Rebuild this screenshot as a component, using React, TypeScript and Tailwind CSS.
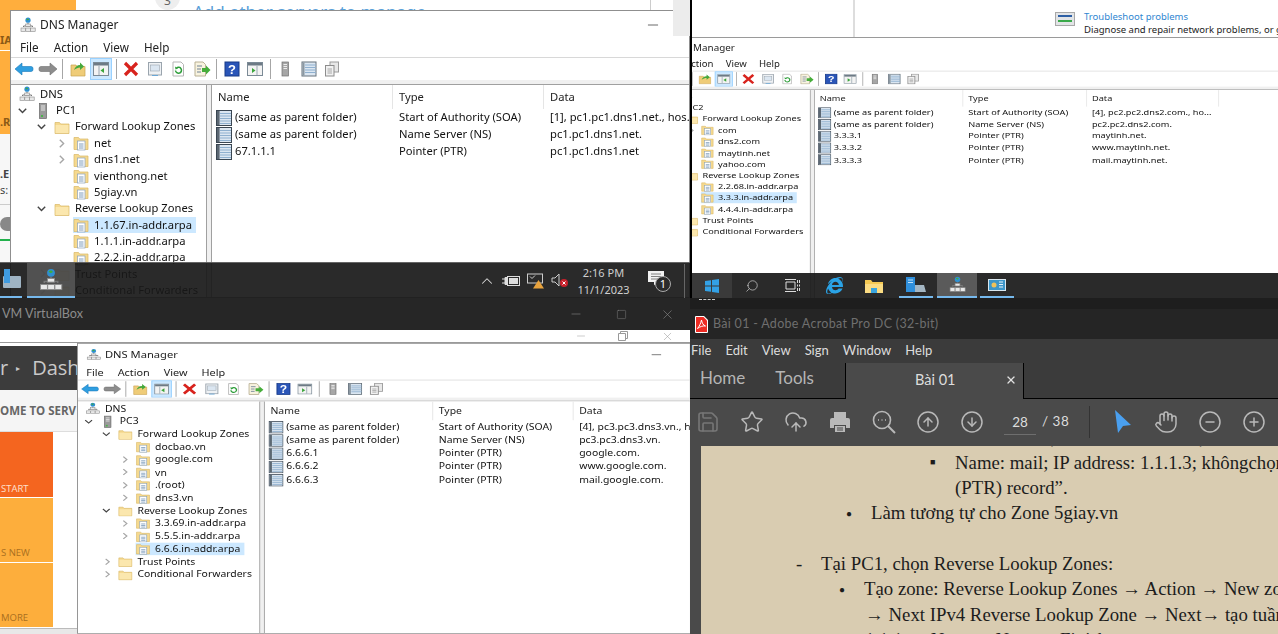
import { ChevronUp, CircleArrowDown, CircleArrowUp, CircleMinus, CirclePlus, CloudUpload, Hand, Minus, Save, Search, Square, Star, X } from "lucide-react";
import { FaInternetExplorer } from "react-icons/fa";

type TreeRow = { label: string; depth: number; icon: "dns" | "server" | "folder" | "zone"; arrow?: "open" | "closed"; selected?: boolean };

// icons of the mmc console
function DnsIcon({ size = 16 }: { size?: number }) {
  return (
    <svg width={size} height={size} viewBox="0 0 16 16">
      <circle cx="8" cy="3.2" r="2.6" fill="#2f8fd0" />
      <path d="M6.4 2.2c1-.9 2.4-.5 2.8.4-.6.6-1 .3-1.4.9-.5-.4-1-.4-1.4-1.3z" fill="#3fae3f" />
      <path d="M8 6v3M3.5 10V9h9v1" stroke="#777" fill="none" />
      <rect x="5.7" y="7" width="4.6" height="2.4" fill="#e8e8e8" stroke="#888" strokeWidth=".6" />
      <rect x="1" y="11" width="4.6" height="3.4" fill="#e8e8e8" stroke="#888" strokeWidth=".6" />
      <rect x="5.8" y="11" width="4.6" height="3.4" fill="#e8e8e8" stroke="#888" strokeWidth=".6" />
      <rect x="10.6" y="11" width="4.6" height="3.4" fill="#e8e8e8" stroke="#888" strokeWidth=".6" />
    </svg>
  );
}

function ServerIcon() {
  return (
    <svg width="16" height="16" viewBox="0 0 16 16">
      <rect x="4.5" y="0.5" width="7" height="15" fill="#9a9a9a" stroke="#666" strokeWidth=".7" />
      <path d="M6 3h4M6 5h4M6 7h4" stroke="#e6e6e6" />
      <rect x="6" y="12" width="2" height="2" fill="#4bb34b" />
    </svg>
  );
}

function FolderIcon() {
  return (
    <svg width="16" height="16" viewBox="0 0 16 16">
      <path d="M1 3.5h4.5l1.2 1.5H15v9.5H1z" fill="#f5d98f" stroke="#d9b765" strokeWidth=".7" />
      <path d="M1.6 6h12.8v8H1.6z" fill="#fbe7ae" />
    </svg>
  );
}

function ZoneIcon() {
  return (
    <svg width="16" height="16" viewBox="0 0 16 16">
      <path d="M1 2.5h4.5L6.7 4H15v10.5H1z" fill="#f5d98f" stroke="#d9b765" strokeWidth=".7" />
      <rect x="4.5" y="6" width="7.5" height="9" fill="#fff" stroke="#8aa2bb" strokeWidth=".7" />
      <path d="M6 9h4.5M6 11h4.5M6 13h4.5" stroke="#5f85ad" strokeWidth=".8" />
    </svg>
  );
}

function RecordIcon() {
  return (
    <svg width="16" height="16" viewBox="0 0 16 16">
      <rect x="0.5" y="0.5" width="15" height="15" fill="#dbe6f1" stroke="#3a4652" />
      <rect x="1" y="1" width="2.6" height="14" fill="#5c6873" />
      <path d="M4 3.5h11M4 6h11M4 8.5h11M4 11h11M4 13.5h11" stroke="#8fb0cf" />
    </svg>
  );
}

function ToolIcon({ name }: { name: string }) {
  switch (name) {
    case "back":
      return (
        <svg width="20" height="16" viewBox="0 0 20 16">
          <path d="M1 8l7-6v3.500h9a2 2 0 0 1 2 2v1a2 2 0 0 1-2 2H8V14z" fill="#2f9ee0" stroke="#1a78b8" strokeWidth=".6" />
        </svg>
      );
    case "forward":
      return (
        <svg width="20" height="16" viewBox="0 0 20 16">
          <path d="M19 8l-7-6v3.500H3a2 2 0 0 0-2 2v1a2 2 0 0 0 2 2h9V14z" fill="#8d8d8d" stroke="#6e6e6e" strokeWidth=".6" />
        </svg>
      );
    case "up":
      return (
        <svg width="16" height="16" viewBox="0 0 16 16">
          <path d="M1 4h5l1 1.500h8V15H1z" fill="#efcc78" stroke="#c9a352" strokeWidth=".7" />
          <path d="M4 9c1-3 3-5 6-5V1.500l4 4-4 3.500V6.500c-2 0-4 1-6 2.500z" fill="#45a83c" />
        </svg>
      );
    case "pane":
      return (
        <svg width="16" height="14" viewBox="0 0 16 14">
          <rect x="0.5" y="0.5" width="15" height="13" fill="#f3f3f3" stroke="#7b8a96" />
          <rect x="1" y="1" width="14" height="2.500" fill="#6d7a85" />
          <path d="M6 4v9" stroke="#9aa7b2" />
          <path d="M11 6v5L7.500 8.500z" fill="#3ba53b" />
        </svg>
      );
    case "delete":
      return (
        <svg width="16" height="16" viewBox="0 0 16 16">
          <path d="M2 2l12 12M14 2L2 14" stroke="#d8231d" strokeWidth="3.200" />
        </svg>
      );
    case "props":
      return (
        <svg width="16" height="16" viewBox="0 0 16 16">
          <rect x="1.500" y="1.500" width="13" height="12.500" fill="#eef1f4" stroke="#9aa4ad" />
          <rect x="3.500" y="4" width="9" height="6" fill="#dbe6f1" stroke="#9aa4ad" strokeWidth=".6" />
          <path d="M5 14.500h6" stroke="#6aa7d6" />
        </svg>
      );
    case "refresh":
      return (
        <svg width="16" height="16" viewBox="0 0 16 16">
          <path d="M3 1h8l2.500 2.500V15H3z" fill="#fff" stroke="#b5b5b5" />
          <path d="M5.500 9.500a3 3 0 1 0 1-2.500" fill="none" stroke="#2e9e3a" strokeWidth="1.500" />
          <path d="M5 5.500l.5 3 2.500-1z" fill="#2e9e3a" />
        </svg>
      );
    case "export":
      return (
        <svg width="18" height="16" viewBox="0 0 18 16">
          <path d="M2 1h8l2.500 2.500V15H2z" fill="#f8f3df" stroke="#b8b094" />
          <path d="M4 5h5M4 8h4M4 11h4" stroke="#6f8195" />
          <path d="M9 7h4V4.500L17.500 9 13 13.500V11H9z" fill="#46ad3a" />
        </svg>
      );
    case "help":
      return (
        <svg width="16" height="16" viewBox="0 0 16 16">
          <rect x="1" y="1" width="14" height="14" fill="#2a55b8" stroke="#173a88" />
          <text x="8" y="13" textAnchor="middle" fontSize="13" fontWeight="700" fill="#fff" fontFamily="Liberation Sans">?</text>
        </svg>
      );
    case "console":
      return (
        <svg width="16" height="14" viewBox="0 0 16 14">
          <rect x="0.500" y="0.500" width="15" height="13" fill="#f3f3f3" stroke="#7b8a96" />
          <rect x="1" y="1" width="14" height="2.500" fill="#6d7a85" />
          <path d="M10 4v9" stroke="#9aa7b2" />
          <path d="M5 6v5l3.500-2.500z" fill="#3ba53b" />
        </svg>
      );
    case "server":
      return (
        <svg width="16" height="16" viewBox="0 0 16 16">
          <rect x="5" y="1" width="6.500" height="14" fill="#a6a6a6" stroke="#6f6f6f" strokeWidth=".7" />
          <path d="M6.500 3.500h3.500M6.500 5.500h3.500M6.500 7.500h3.500" stroke="#ececec" />
        </svg>
      );
    case "list":
      return (
        <svg width="16" height="16" viewBox="0 0 16 16">
          <rect x="1" y="1" width="14" height="14" fill="#dbe6f1" stroke="#66727d" />
          <rect x="1.500" y="1.500" width="2" height="13" fill="#8b97a1" />
          <path d="M4 4h11M4 6.500h11M4 9h11M4 11.500h11" stroke="#8fb0cf" />
        </svg>
      );
    default:
      return (
        <svg width="16" height="16" viewBox="0 0 16 16">
          <rect x="6" y="1" width="8.500" height="10" fill="#e8e8e8" stroke="#9b9b9b" />
          <rect x="1.500" y="4.500" width="8.500" height="10.500" fill="#f1f1f1" stroke="#8d8d8d" />
          <path d="M3.500 8h4.500M3.500 10h4.500M3.500 12h4.500" stroke="#a8a8a8" />
        </svg>
      );
  }
}

function ToolSep() {
  return <div className="mx-[2px] h-[20px] w-px bg-[#a6a6a6]" />;
}

function Tool({ name, active }: { name: string; active?: boolean }) {
  return (
    <div className={active ? "flex h-[22px] w-[22px] items-center justify-center border border-[#99d1ff] bg-[#cce8ff]" : "flex h-[22px] w-[22px] items-center justify-center"}>
      <ToolIcon name={name} />
    </div>
  );
}

function TreeLine({ row }: { row: TreeRow }) {
  return (
    <div className="flex h-[16.35px] items-center whitespace-nowrap">
      <div className="flex h-full shrink-0 items-center justify-end pr-[8px]" style={{ width: 5 + 19 * row.depth }}>
        {row.arrow === "open" && (
          <svg width="9" height="6" viewBox="0 0 9 6"><path d="M.8 .8L4.500 4.600 8.200 .8" fill="none" stroke="#444" strokeWidth="1.400" /></svg>
        )}
        {row.arrow === "closed" && (
          <svg width="6" height="9" viewBox="0 0 6 9"><path d="M.8 .8L4.600 4.500 .8 8.200" fill="none" stroke="#a6a6a6" strokeWidth="1.400" /></svg>
        )}
      </div>
      <div className={row.selected ? "flex h-full items-center gap-[5px] bg-[#cce8ff] pr-[4px]" : "flex h-full items-center gap-[5px]"}>
        {row.icon === "dns" && <DnsIcon />}
        {row.icon === "server" && <ServerIcon />}
        {row.icon === "folder" && <FolderIcon />}
        {row.icon === "zone" && <ZoneIcon />}
        <span>{row.label}</span>
      </div>
    </div>
  );
}

function DnsWindow({ className, tree, records, minimize = true, titleClass = "ml-[4px]" }: { className: string; tree: TreeRow[]; records: string[][]; minimize?: boolean; titleClass?: string }) {
  return (
    <div className={"absolute flex flex-col overflow-hidden border border-[#8f8f8f] bg-white font-['Noto_Sans',sans-serif] text-[11.2px] text-[#111] blur-[0.3px] " + className}>
      <div className="flex h-[27px] shrink-0 items-center pl-[9px] text-[12px]">
        <DnsIcon />
        <span className={"text-[#222] " + titleClass}>DNS Manager</span>
        {minimize && <Minus size={16} strokeWidth={1.2} className="ml-auto mr-[28px] text-[#444]" />}
      </div>
      <div className="flex h-[20px] shrink-0 items-center gap-[15px] border-b border-[#d8d8d8] pl-[9px] text-[11.7px] text-[#222]">
        <span>File</span>
        <span>Action</span>
        <span>View</span>
        <span>Help</span>
      </div>
      <div className="flex h-[22px] shrink-0 items-center gap-[1.5px] pl-[2px]">
        <Tool name="back" />
        <Tool name="forward" />
        <ToolSep />
        <Tool name="up" />
        <Tool name="pane" active />
        <ToolSep />
        <Tool name="delete" />
        <Tool name="props" />
        <Tool name="refresh" />
        <Tool name="export" />
        <ToolSep />
        <Tool name="help" />
        <Tool name="console" />
        <ToolSep />
        <Tool name="server" />
        <Tool name="list" />
        <Tool name="copy" />
      </div>
      <div className="h-[5px] shrink-0 border-b border-[#a0a0a0] bg-[#f0f0f0]" />
      <div className="flex min-h-0 flex-1 bg-[#f0f0f0]">
        <div className="w-[196px] shrink-0 overflow-hidden border-r border-[#a0a0a0] bg-white pt-px">
          {tree.map((row) => (
            <TreeLine key={row.label} row={row} />
          ))}
        </div>
        <div className="ml-[4px] flex-1 overflow-hidden border-l border-[#a0a0a0] bg-white">
          <div className="flex h-[24px] items-center text-[#222]">
            <div className="h-full w-[181px] shrink-0 border-r border-[#e5e5e5] pl-[6px] leading-[23px]">Name</div>
            <div className="h-full w-[151px] shrink-0 border-r border-[#e5e5e5] pl-[6px] leading-[23px]">Type</div>
            <div className="h-full w-[161px] shrink-0 border-r border-[#e5e5e5] pl-[6px] leading-[23px]">Data</div>
          </div>
          {records.map((record, i) => (
            <div key={i} className="flex h-[17.1px] items-center whitespace-nowrap">
              <div className="flex w-[181px] shrink-0 items-center gap-[3px] pl-[4px]">
                <RecordIcon />
                <span>{record[0]}</span>
              </div>
              <div className="w-[151px] shrink-0 pl-[6px]">{record[1]}</div>
              <div className="w-[161px] shrink-0 truncate pl-[6px]">{record[2]}</div>
            </div>
          ))}
        </div>
      </div>
    </div>
  );
}

const tree1: TreeRow[] = [
  { label: "DNS", depth: 0, icon: "dns" },
  { label: "PC1", depth: 1, icon: "server", arrow: "open" },
  { label: "Forward Lookup Zones", depth: 2, icon: "folder", arrow: "open" },
  { label: "net", depth: 3, icon: "zone", arrow: "closed" },
  { label: "dns1.net", depth: 3, icon: "zone", arrow: "closed" },
  { label: "vienthong.net", depth: 3, icon: "zone" },
  { label: "5giay.vn", depth: 3, icon: "zone" },
  { label: "Reverse Lookup Zones", depth: 2, icon: "folder", arrow: "open" },
  { label: "1.1.67.in-addr.arpa", depth: 3, icon: "zone", selected: true },
  { label: "1.1.1.in-addr.arpa", depth: 3, icon: "zone" },
  { label: "2.2.2.in-addr.arpa", depth: 3, icon: "zone" },
  { label: "Trust Points", depth: 2, icon: "folder", arrow: "closed" },
  { label: "Conditional Forwarders", depth: 2, icon: "folder", arrow: "closed" },
];

const tree2: TreeRow[] = [
  { label: "DNS", depth: 0, icon: "dns" },
  { label: "PC2", depth: 1, icon: "server", arrow: "open" },
  { label: "Forward Lookup Zones", depth: 2, icon: "folder", arrow: "open" },
  { label: "com", depth: 3, icon: "zone", arrow: "closed" },
  { label: "dns2.com", depth: 3, icon: "zone" },
  { label: "maytinh.net", depth: 3, icon: "zone" },
  { label: "yahoo.com", depth: 3, icon: "zone" },
  { label: "Reverse Lookup Zones", depth: 2, icon: "folder", arrow: "open" },
  { label: "2.2.68.in-addr.arpa", depth: 3, icon: "zone" },
  { label: "3.3.3.in-addr.arpa", depth: 3, icon: "zone", selected: true },
  { label: "4.4.4.in-addr.arpa", depth: 3, icon: "zone" },
  { label: "Trust Points", depth: 2, icon: "folder", arrow: "closed" },
  { label: "Conditional Forwarders", depth: 2, icon: "folder", arrow: "closed" },
];

const tree3: TreeRow[] = [
  { label: "DNS", depth: 0, icon: "dns" },
  { label: "PC3", depth: 1, icon: "server", arrow: "open" },
  { label: "Forward Lookup Zones", depth: 2, icon: "folder", arrow: "open" },
  { label: "docbao.vn", depth: 3, icon: "zone" },
  { label: "google.com", depth: 3, icon: "zone", arrow: "closed" },
  { label: "vn", depth: 3, icon: "zone", arrow: "closed" },
  { label: ".(root)", depth: 3, icon: "zone", arrow: "closed" },
  { label: "dns3.vn", depth: 3, icon: "zone", arrow: "closed" },
  { label: "Reverse Lookup Zones", depth: 2, icon: "folder", arrow: "open" },
  { label: "3.3.69.in-addr.arpa", depth: 3, icon: "zone", arrow: "closed" },
  { label: "5.5.5.in-addr.arpa", depth: 3, icon: "zone", arrow: "closed" },
  { label: "6.6.6.in-addr.arpa", depth: 3, icon: "zone", selected: true },
  { label: "Trust Points", depth: 2, icon: "folder", arrow: "closed" },
  { label: "Conditional Forwarders", depth: 2, icon: "folder", arrow: "closed" },
];

const SOA = "Start of Authority (SOA)";
const NS = "Name Server (NS)";
const PTR = "Pointer (PTR)";
const same = "(same as parent folder)";

const records1 = [
  [same, SOA, "[1], pc1.pc1.dns1.net., hos."],
  [same, NS, "pc1.pc1.dns1.net."],
  ["67.1.1.1", PTR, "pc1.pc1.dns1.net"],
];
const records2 = [
  [same, SOA, "[4], pc2.pc2.dns2.com., ho..."],
  [same, NS, "pc2.pc2.dns2.com."],
  ["3.3.3.1", PTR, "maytinh.net."],
  ["3.3.3.2", PTR, "www.maytinh.net."],
  ["3.3.3.3", PTR, "mail.maytinh.net."],
];
const records3 = [
  [same, SOA, "[4], pc3.pc3.dns3.vn., hostmaster"],
  [same, NS, "pc3.pc3.dns3.vn."],
  ["6.6.6.1", PTR, "google.com."],
  ["6.6.6.2", PTR, "www.google.com."],
  ["6.6.6.3", PTR, "mail.google.com."],
];

function TrayIcons() {
  return (
    <div className="flex items-center text-[#d8d8d8]">
      <ChevronUp size={18} strokeWidth={1.4} className="mr-[6px]" />
      <svg width="18" height="12" viewBox="0 0 18 12" className="mr-[7px]">
        <rect x="5.500" y="1.500" width="12" height="9" fill="none" stroke="#ddd" />
        <rect x="7" y="3" width="9" height="6" fill="#ddd" />
        <path d="M0 4h3M0 8h3M3 2.500h2.500v7H3z" stroke="#ddd" fill="#ddd" />
      </svg>
      <svg width="18" height="16" viewBox="0 0 18 16" className="mr-[6px]">
        <rect x="0.500" y="1" width="15" height="9" fill="none" stroke="#ccc" />
        <path d="M3 3.500l2 2 3-3" stroke="#ccc" fill="none" />
        <path d="M11.500 7l5.500 8.500H6z" fill="#e8a33d" />
      </svg>
      <svg width="18" height="16" viewBox="0 0 18 16" className="mr-[7.500px]">
        <path d="M1 5h3l4-4v12L4 9H1z" fill="none" stroke="#ccc" />
        <circle cx="13" cy="10" r="4" fill="#c8202b" />
        <path d="M11.500 8.500l3 3M14.500 8.500l-3 3" stroke="#fff" />
      </svg>
      <div className="w-[54px] text-center text-[11px] leading-[17px] text-[#cfcfcf]">
        <div>2:16 PM</div>
        <div className="whitespace-nowrap">11/1/2023</div>
      </div>
      <div className="relative ml-[17.500px] mr-[20px] h-[20px] w-[16px]">
        <svg width="16" height="15" viewBox="0 0 16 15">
          <path d="M0 0h16v11H9l-3 3.500V11H0z" fill="#f2f2f2" />
          <path d="M3 3h10M3 5.500h10M3 8h7" stroke="#666" strokeWidth=".8" />
        </svg>
        <div className="absolute left-[7px] top-[5px] flex h-[16px] w-[16px] items-center justify-center rounded-full border border-[#aaa] bg-[#2b2b2b] text-[11px] leading-none text-white">1</div>
      </div>
    </div>
  );
}

function VmOneTop() {
  return (
    <div className="relative overflow-hidden bg-white">
      {/* server manager behind the console */}
      <div className="absolute left-0 top-0 h-[50px] w-[76px] bg-[#ffae3d] pl-0 pt-[32px] text-[11px] font-bold text-[#8c5a16]">IA</div>
      <div className="absolute left-0 top-[51px] h-[83px] w-[76px] bg-[#ffae3d] pt-[63px] text-[11px] font-bold text-[#8c5a16]">.R</div>
      <div className="absolute left-0 top-[134px] h-[130px] w-[10px] overflow-hidden bg-[#f7f7f7] font-['Noto_Sans',sans-serif] text-[11px] text-[#444]">
        <div className="mt-[33px] font-bold leading-[14px]">.E</div>
        <div className="mt-[2px] leading-[14px]">s:</div>
        <div className="mt-[7px] h-px bg-[#ccc]" />
        <div className="mt-[12px] h-[14px] w-[10px] rounded-l-full bg-[#888]" />
        <div className="mt-[8px] h-[2px] bg-[#22b14c]" />
      </div>
      <div className="absolute left-[155px] top-[-15px] flex h-[25px] w-[25px] items-end justify-center rounded-full bg-[#eeeeee] text-[12px] text-[#666]">3</div>
      <div className="absolute left-[193px] top-[2px] whitespace-nowrap font-['Noto_Sans',sans-serif] text-[17px] leading-[20px] text-[#5aa0d8]">Add other servers to manage</div>
      <div className="absolute left-[650px] top-0 h-[10px] w-px bg-[#cccccc]" />

      <DnsWindow className="left-[10px] top-[10px] h-[288px] w-[680px]" tree={tree1} records={records1} />
      <div className="absolute left-[673px] top-0 h-[36px] w-[17px] bg-[#ececec]" />

      {/* see-through windows taskbar */}
      <div className="absolute inset-x-0 bottom-0 flex h-[36px] items-center border-t border-[#bdbdbd]/40 bg-[#181818]/92">
        <div className="relative h-full w-[22px] overflow-hidden border-b-2 border-[#76b9ed]">
          <div className="absolute right-[1px] top-[13px] h-[12px] w-[18px] rounded-[1px] bg-[#9fb4c4]" />
          <div className="absolute right-[12px] top-[6px] h-[14px] w-[6px] bg-[#3f9be0]" />
        </div>
        <div className="ml-[5px] flex h-full w-[48px] items-center justify-center border-b-2 border-[#76b9ed] bg-[#9a9a9a]/35">
          <DnsIcon size={24} />
        </div>
        <div className="ml-auto border-r border-[#666]">
          <TrayIcons />
        </div>
        <div className="w-[5px]" />
      </div>
    </div>
  );
}

function VmThreeBottom() {
  return (
    <div className="relative flex flex-col overflow-hidden bg-white">
      <div className="flex h-[32px] shrink-0 items-center bg-[#262626] bg-[radial-gradient(#383838_0.6px,transparent_0.6px)] bg-[length:4px_4px] pl-[2px] font-['Lato',sans-serif] text-[12.600px] text-[#8c8c8c]">
        <span className="w-[90px] shrink-0 whitespace-nowrap">VM VirtualBox</span>
        <Minus size={14} strokeWidth={1} className="ml-[477px] shrink-0 text-[#888]" />
        <Square size={11} strokeWidth={1} className="ml-[33px] shrink-0 text-[#888]" />
        <X size={15} strokeWidth={1} className="ml-[33px] shrink-0 text-[#888]" />
      </div>
      <div className="flex h-[13px] shrink-0 items-center border-b border-[#9a9a9a]">
        <Minus size={12} strokeWidth={1} className="ml-[575px] text-[#999]" />
        <svg width="10" height="10" viewBox="0 0 10 10" className="ml-[31px]"><path d="M.5 2.500h7v7h-7zM2.500 2.500v-2h7v7h-2" fill="#fff" stroke="#999" /></svg>
        <X size={13} strokeWidth={1} className="ml-[33px] text-[#999]" />
      </div>
      {/* server manager dashboard behind the console */}
      <div className="flex w-[77px] flex-1 flex-col font-['Open_Sans',sans-serif]">
        <div className="h-[3px] shrink-0" />
        <div className="flex h-[44px] shrink-0 items-center gap-[8px] overflow-hidden whitespace-nowrap bg-[#3c3c3c] text-[20px] text-[#c9c9c9]">
          <span>r</span>
          <span className="text-[8px]">▸</span>
          <span className="ml-[4px]">Dash</span>
        </div>
        <div className="flex h-[42px] shrink-0 items-center overflow-hidden whitespace-nowrap border-b border-[#dddddd] bg-[#f5f5f5] text-[11.500px] font-bold text-[#666]">OME TO SERV</div>
        <div className="flex h-[65px] w-[53px] shrink-0 items-end bg-[#f4651f] pb-[1px] pl-[1px] text-[9.500px] text-[#ffe0cc]">START</div>
        <div className="mt-px flex h-[64px] w-[53px] shrink-0 items-end bg-[#fdae3c] pb-[2px] pl-[1px] text-[9.500px] text-[#a96f20]">S NEW</div>
        <div className="mt-px flex h-[64px] w-[53px] shrink-0 items-end bg-[#fdae3c] pb-[2px] pl-[1px] text-[9.500px] text-[#a96f20]">MORE</div>
        <div className="mt-px flex-1 border-t border-[#bbbbbb] bg-[#e8e8e8]" />
      </div>
      <DnsWindow className="left-[77px] top-[45px] h-[373px] w-[660px] origin-top-left scale-x-[0.93] scale-y-[0.78]" tree={tree3} records={records3} />
    </div>
  );
}

function VmTwoTop() {
  return (
    <div className="relative overflow-hidden border-l-2 border-black bg-white">
      <div className="absolute left-[161px] top-0 h-[37px] w-[2px] bg-[#dddddd]" />
      <div className="absolute left-[363px] top-[12px]">
        <svg width="20" height="14" viewBox="0 0 20 14">
          <rect x="0.500" y="0.500" width="19" height="13" fill="#e2e4e6" stroke="#a8a8a8" />
          <path d="M3 4h14" stroke="#2d5fa5" strokeWidth="2" />
          <path d="M3 9h14" stroke="#3aa94a" strokeWidth="2" />
        </svg>
      </div>
      <div className="absolute left-[392px] top-[10px] whitespace-nowrap font-['Noto_Sans',sans-serif] text-[9.500px] leading-[13px]">
        <div className="text-[#2f86d1]">Troubleshoot problems</div>
        <div className="text-[#222]">Diagnose and repair network problems, or get troubleshooting information.</div>
      </div>
      <div className="absolute inset-x-0 top-[37px] h-px bg-[#9a9a9a]" />

      <DnsWindow minimize={false} titleClass="ml-0" className="left-[-42px] top-[39px] h-[377px] w-[790px] origin-top-left scale-x-[0.82] scale-y-[0.69] border-0" tree={tree2} records={records2} />

      <div className="absolute inset-x-0 bottom-0 flex h-[25px] items-center bg-[#181818]/92">
        <div className="flex h-full w-[40px] items-center justify-center bg-[#3a3a3a]">
          <svg width="14" height="14" viewBox="0 0 14 14">
            <path d="M0 2l6-.8V6.500H0zM7 1l7-1v6.500H7zM0 7.500h6v5.300l-6-.8zM7 7.500h7V14l-7-1z" fill="#33a1e6" />
          </svg>
        </div>
        <div className="flex h-full w-[40px] items-center justify-center">
          <Search size={14} strokeWidth={1.2} className="-scale-x-100 text-[#d0d0d0]" />
        </div>
        <div className="flex h-full w-[40px] items-center justify-center">
          <svg width="15" height="13" viewBox="0 0 15 13"><path d="M1 3h9v7H1zM0 .5h11M0 12.500h11M12.500 1v3M12.500 5.500v2M12.500 9v3M14.500 1v3M14.500 5.500v2M14.500 9v3" fill="none" stroke="#ddd" /></svg>
        </div>
        <div className="ml-[2px] flex h-full w-[40px] items-center justify-center">
          <FaInternetExplorer size={17} className="text-[#2aa3e6]" />
        </div>
        <div className="flex h-full w-[40px] items-center justify-center">
          <svg width="18" height="14" viewBox="0 0 18 14"><path d="M0 1h6l1.500 2H18v11H0z" fill="#f5c953" /><path d="M0 5h18v9H0z" fill="#fbdc83" /><rect x="6" y="9" width="6" height="5" fill="#3aa5e0" /></svg>
        </div>
        <div className="ml-[5px] flex h-full w-[34px] items-center justify-center border-b-2 border-[#76b9ed]">
          <svg width="20" height="15" viewBox="0 0 20 15"><path d="M0 0h9v15H0z" fill="#2f8fdb" /><path d="M2 3h5M2 5.500h5" stroke="#bfe0f8" /><path d="M9 8h9l2 7H9z" fill="#a4b6c3" /></svg>
        </div>
        <div className="ml-[4px] flex h-full w-[40px] items-center justify-center border-b-2 border-[#76b9ed] bg-[#8a8a8a]/50">
          <DnsIcon size={17} />
        </div>
        <div className="ml-[3px] flex h-full w-[34px] items-center justify-center border-b-2 border-[#76b9ed]">
          <svg width="18" height="12" viewBox="0 0 18 12"><rect width="18" height="12" fill="#d9e6ee" /><rect x="1" y="1" width="16" height="10" fill="#3d96c9" /><circle cx="6" cy="6" r="2.500" fill="#f0c25a" /><path d="M11 3h4M11 5.500h4M11 8h4" stroke="#e6f2fa" /></svg>
        </div>
      </div>
    </div>
  );
}

function PageLine({ className, marker, markerClass = "", children }: { className: string; marker?: string; markerClass?: string; children?: string }) {
  return (
    <div className={"flex h-[25.300px] items-center whitespace-nowrap " + className}>
      {marker && <span className={"w-[25px] shrink-0 text-left " + markerClass}>{marker}</span>}
      <span>{children}</span>
    </div>
  );
}

function AcrobatWindow() {
  const icon = "shrink-0 text-[#b9b9b9]";
  return (
    <div className="flex flex-col overflow-hidden bg-[#4a4a4a] font-['Lato',sans-serif]">
      <div className="h-[11px] shrink-0 bg-[#1e1e1e] pl-[9px] pt-[1px]">
        <div className="h-[2px] w-[16px] border-t border-dashed border-[#cccccc]" />
      </div>
      <div className="flex h-[30px] shrink-0 items-center bg-[#252525] bg-[radial-gradient(#303030_0.6px,transparent_0.6px)] bg-[length:4px_4px] pl-[5px]">
        <svg width="13" height="17" viewBox="0 0 13 17">
          <path d="M0 1a1 1 0 0 1 1-1h8l4 4v12a1 1 0 0 1-1 1H1a1 1 0 0 1-1-1z" fill="#fff" />
          <path d="M1 1h7.500l3.500 3.500V16H1z" fill="#ee2c24" />
          <path d="M6.500 4c-1 4-2 6-4 8.500 2.500-2 6-3 8-2.500-2.500-1-3.500-3-4-6z" fill="none" stroke="#fff" strokeWidth="1" />
        </svg>
        <span className="ml-[5px] whitespace-nowrap text-[12.500px] tracking-[0.3px] text-[#6f6f6f]">Bài 01 - Adobe Acrobat Pro DC (32-bit)</span>
      </div>
      <div className="flex h-[24px] shrink-0 items-center gap-[14px] bg-[#3b3b3b] pl-[1px] text-[13px] text-[#dddddd]">
        <span>File</span>
        <span>Edit</span>
        <span>View</span>
        <span>Sign</span>
        <span>Window</span>
        <span>Help</span>
      </div>
      <div className="flex h-[36px] shrink-0 bg-[#3b3b3b]">
        <div className="flex w-[155px] items-center gap-[30px] border-b border-black pb-[6px] pl-[10px] text-[17px] text-[#b5b5b5]">
          <span>Home</span>
          <span>Tools</span>
        </div>
        <div className="flex w-[179px] items-center border-l border-r border-black bg-[#4a4a4a] pb-[2px] text-[14.500px] text-[#dddddd]">
          <span className="ml-[69px]">Bài 01</span>
          <X size={12} strokeWidth={2.6} className="ml-[50px] text-[#e0e0e0]" />
        </div>
        <div className="flex-1 border-b border-black" />
      </div>
      <div className="flex h-[47px] shrink-0 items-center pb-[2px] pl-[6px]">
        <div className="flex items-center gap-[20px]">
          <Save size={24} strokeWidth={1.6} className="shrink-0 text-[#777777]" />
          <Star size={24} strokeWidth={1.5} className={icon} />
          <CloudUpload size={24} strokeWidth={1.5} className={icon} />
          <svg width="24" height="24" viewBox="0 0 24 24" className="shrink-0">
            <path d="M6 8V2h12v6z" fill="#b9b9b9" />
            <path d="M2 10a2 2 0 0 1 2-2h16a2 2 0 0 1 2 2v8h-4v-3H6v3H2z" fill="#b9b9b9" />
            <path d="M7 16h10v6H7z" fill="#b9b9b9" />
            <path d="M9 18h6M9 20h6" stroke="#4a4a4a" />
          </svg>
          <svg width="24" height="24" viewBox="0 0 24 24" fill="none" stroke="#b9b9b9" className="shrink-0">
            <circle cx="10" cy="10" r="8.500" strokeWidth="1.600" />
            <path d="M16 16l7 7" strokeWidth="2" />
            <path d="M6 10h1M9.500 10h1M13 10h1" strokeWidth="1.600" />
          </svg>
          <CircleArrowUp size={24} strokeWidth={1.5} className={icon} />
          <CircleArrowDown size={24} strokeWidth={1.5} className={icon} />
        </div>
        <div className="ml-[20px] h-[26px] w-[32px] border-b border-[#6e6e6e] text-center text-[13.500px] leading-[26px] text-[#dddddd]">28</div>
        <div className="ml-[6px] whitespace-nowrap text-[13.500px] tracking-[0.5px] text-[#dddddd]">/ 38</div>
        <div className="ml-[20px] h-[32px] w-px bg-[#333333]" />
        <div className="ml-[20px] flex items-center gap-[20px]">
          <svg width="24" height="24" viewBox="0 0 24 24" className="shrink-0">
            <path d="M5 0l3 23 5-7 8-1z" fill="#4aa0f0" />
          </svg>
          <Hand size={24} strokeWidth={1.5} className={icon} />
          <CircleMinus size={24} strokeWidth={1.5} className={icon} />
          <CirclePlus size={24} strokeWidth={1.5} className={icon} />
        </div>
      </div>
      <div className="ml-[11px] flex-1 overflow-hidden bg-[#d9ccb1] font-['Liberation_Serif',serif] text-[18.800px] text-[#1c1c1c]">
        <div className="-mt-[21px]">
          <PageLine className="pl-[254px]">Name: www; IP address: 1.1.1.2;</PageLine>
          <PageLine className="pl-[229px]" marker="■" markerClass="text-[9px]">Name: mail; IP address: 1.1.1.3; khôngchọn “Create associated pointer</PageLine>
          <PageLine className="pl-[254px]">(PTR) record”.</PageLine>
          <PageLine className="pl-[145px]" marker="●" markerClass="text-[10px]">Làm tương tự cho Zone 5giay.vn</PageLine>
          <PageLine className="pl-[145px]" />
          <PageLine className="pl-[95px]" marker="-">Tại PC1, chọn Reverse Lookup Zones:</PageLine>
          <PageLine className="pl-[138px]" marker="●" markerClass="text-[10px]">Tạo zone: Reverse Lookup Zones → Action → New zone → Next → Primary zone</PageLine>
          <PageLine className="pl-[164px]">→ Next IPv4 Reverse Lookup Zone → Next→ tạo tuần tự các zone</PageLine>
          <PageLine className="pl-[164px]">1.1.1 → Next → Next → Finish</PageLine>
        </div>
      </div>
    </div>
  );
}

export default function App() {
  return (
    <div className="relative grid h-[634px] w-[1278px] grid-cols-[690px_588px] grid-rows-[298px_336px] overflow-hidden bg-black">
      <VmOneTop />
      <VmTwoTop />
      <VmThreeBottom />
      <AcrobatWindow />
    </div>
  );
}
